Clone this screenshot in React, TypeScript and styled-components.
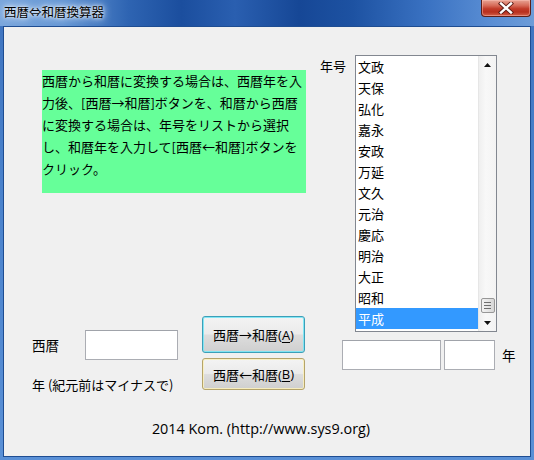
import styled, { createGlobalStyle } from "styled-components";

const eras = [
  "文政",
  "天保",
  "弘化",
  "嘉永",
  "安政",
  "万延",
  "文久",
  "元治",
  "慶応",
  "明治",
  "大正",
  "昭和",
  "平成",
];

export default function App() {
  return (
    <>
      <GlobalStyle />
      <Frame>
        <TitleBar>
          <Title>西暦⇔和暦換算器</Title>
          <CloseButton aria-label="close">
            <svg width="16" height="12" viewBox="0 0 16 12">
              <path
                d="M3 1.5 L13 10.5 M13 1.5 L3 10.5"
                stroke="#5a1a14"
                strokeWidth="4.2"
                strokeLinecap="square"
              />
              <path
                d="M3 1.5 L13 10.5 M13 1.5 L3 10.5"
                stroke="#ffffff"
                strokeWidth="2.4"
                strokeLinecap="square"
              />
            </svg>
          </CloseButton>
        </TitleBar>

        <Client>
          <Columns>
            <LeftColumn>
              <Info>
                <span>西暦から和暦に変換する場合は、西暦年を入</span>
                <span>力後、[西暦→和暦]ボタンを、和暦から西暦</span>
                <span>に変換する場合は、年号をリストから選択</span>
                <span>し、和暦年を入力して[西暦←和暦]ボタンを</span>
                <span>クリック。</span>
              </Info>

              <ConvertRow>
                <Fields>
                  <FieldRow>
                    <FieldLabel>西暦</FieldLabel>
                    <TextBox $width={93} />
                  </FieldRow>
                  <Note>年 (紀元前はマイナスで)</Note>
                </Fields>
                <Buttons>
                  <WinButton $focused>
                    西暦→和暦(<u>A</u>)
                  </WinButton>
                  <WinButton>
                    西暦←和暦(<u>B</u>)
                  </WinButton>
                </Buttons>
              </ConvertRow>
            </LeftColumn>

            <RightColumn>
              <ListRow>
                <EraLabel>年号</EraLabel>
                <ListBox>
                  <Items>
                    {eras.map((era) => (
                      <Item key={era} $selected={era === "平成"}>
                        {era}
                      </Item>
                    ))}
                  </Items>
                  <ScrollBar>
                    <Arrow>
                      <svg width="7" height="4" viewBox="0 0 7 4">
                        <path d="M3.5 0 L7 4 L0 4 Z" fill="#111" />
                      </svg>
                    </Arrow>
                    <Track />
                    <Thumb>
                      <Grip />
                      <Grip />
                      <Grip />
                    </Thumb>
                    <Arrow>
                      <svg width="7" height="4" viewBox="0 0 7 4">
                        <path d="M0 0 L7 0 L3.5 4 Z" fill="#111" />
                      </svg>
                    </Arrow>
                  </ScrollBar>
                </ListBox>
              </ListRow>

              <InputsRow>
                <TextBox $width={99} />
                <TextBox $width={51} />
                <YearLabel>年</YearLabel>
              </InputsRow>
            </RightColumn>
          </Columns>

          <Footer>2014 Kom. (http://www.sys9.org)</Footer>
        </Client>
      </Frame>
    </>
  );
}

const GlobalStyle = createGlobalStyle`
  html, body {
    margin: 0;
    padding: 0;
    background: #ffffff;
  }

  body {
    font-family: "Noto Sans CJK JP", "Noto Sans", sans-serif;
    font-size: 13px;
    color: #000;
  }
`;

const Frame = styled.div`
  width: 534px;
  height: 460px;
  display: flex;
  flex-direction: column;
  background: linear-gradient(180deg, #3f74bf 0%, #4a82cc 40%, #5a90d6 100%);
  box-sizing: border-box;
  overflow: hidden;
`;

const TitleBar = styled.div`
  height: 26px;
  flex: none;
  display: flex;
  align-items: flex-start;
  justify-content: space-between;
  background: linear-gradient(
    90deg,
    #7aa6dc 0%,
    #6496d4 12%,
    #2e64b2 24%,
    #1b4e9e 34%,
    #2a5fb0 44%,
    #164796 56%,
    #1d52a2 66%,
    #3a72c2 80%,
    #5a8ed4 92%,
    #6c9cd8 100%
  );
`;

const Title = styled.div`
  margin: 4px 0 0 4px;
  font-size: 12.5px;
  line-height: 16px;
  color: #000;
  padding: 0 6px 0 0;
  text-shadow: 0 0 6px #e6eef8, 0 0 10px #d8e6f6, 0 0 3px #ffffff;
  white-space: nowrap;
`;

const CloseButton = styled.div`
  width: 50px;
  height: 17px;
  margin-right: 3px;
  box-sizing: border-box;
  border: 1px solid #5c1e18;
  border-top: 0;
  border-radius: 0 0 4px 4px;
  background: linear-gradient(
    180deg,
    #e8a494 0%,
    #d66a58 35%,
    #c13a28 55%,
    #b8301f 75%,
    #d2604a 100%
  );
  box-shadow: inset 0 0 0 1px rgba(255, 200, 190, 0.45);
  display: flex;
  align-items: center;
  justify-content: center;
`;

const Client = styled.div`
  flex: 1;
  margin: 0 3px 3px 3px;
  border: 1px solid #1e4d92;
  background: #f0f0f0;
  display: flex;
  flex-direction: column;
`;

const Columns = styled.div`
  display: flex;
  align-items: flex-start;
`;

const LeftColumn = styled.div`
  width: 306px;
  display: flex;
  flex-direction: column;
`;

const Info = styled.div`
  margin: 43px 0 0 38px;
  width: 264px;
  height: 123px;
  background: #66ff99;
  display: flex;
  flex-direction: column;
  font-size: 13px;
  line-height: 22px;

  span {
    white-space: nowrap;
  }
`;

const ConvertRow = styled.div`
  margin-top: 123px;
  padding-left: 28px;
  display: flex;
  align-items: flex-start;
`;

const Fields = styled.div`
  width: 170px;
  display: flex;
  flex-direction: column;
`;

const FieldRow = styled.div`
  margin-top: 14px;
  display: flex;
  align-items: center;
`;

const FieldLabel = styled.span`
  width: 53px;
  font-size: 13.5px;
`;

const Note = styled.div`
  margin-top: 16px;
  line-height: 18px;
  font-size: 13px;
  white-space: nowrap;
`;

const TextBox = styled.div<{ $width: number }>`
  width: ${(p) => p.$width}px;
  height: 30px;
  box-sizing: border-box;
  background: #ffffff;
  border: 1px solid #abadb3;
  border-top-color: #a0a3aa;
  flex: none;
`;

const Buttons = styled.div`
  width: 103px;
  display: flex;
  flex-direction: column;
  gap: 5px;
`;

const WinButton = styled.div<{ $focused?: boolean }>`
  height: ${(p) => (p.$focused ? 37 : 32)}px;
  box-sizing: border-box;
  border: 1px solid ${(p) => (p.$focused ? "#3c9fb8" : "#b5a46a")};
  border-radius: 3px;
  background: linear-gradient(180deg, #f3f3f3 0%, #ebebeb 48%, #dddddd 52%, #cfcfcf 100%);
  box-shadow: inset 0 0 0 1px
    ${(p) => (p.$focused ? "rgba(120, 230, 245, 0.9)" : "rgba(250, 240, 190, 0.9)")};
  display: flex;
  align-items: center;
  justify-content: center;
  font-family: "Open Sans", "Noto Sans CJK JP", sans-serif;
  font-size: 13px;
  white-space: nowrap;

  u {
    text-underline-offset: 2px;
  }
`;

const RightColumn = styled.div`
  margin-left: 10px;
  display: flex;
  flex-direction: column;
`;

const ListRow = styled.div`
  margin-top: 28px;
  display: flex;
  align-items: flex-start;
`;

const EraLabel = styled.span`
  width: 35px;
  padding-top: 2px;
  line-height: 18px;
  font-size: 13px;
`;

const ListBox = styled.div`
  width: 142px;
  height: 277px;
  box-sizing: border-box;
  border: 1px solid #828790;
  background: #ffffff;
  display: flex;
`;

const Items = styled.div`
  flex: 1;
  display: flex;
  flex-direction: column;
`;

const Item = styled.div<{ $selected?: boolean }>`
  height: 21px;
  line-height: 21px;
  padding-left: 2px;
  font-size: 13px;
  background: ${(p) => (p.$selected ? "#3399ff" : "transparent")};
  color: ${(p) => (p.$selected ? "#ffffff" : "#000000")};
`;

const ScrollBar = styled.div`
  width: 17px;
  border-left: 1px solid #e6e6e6;
  background: linear-gradient(90deg, #efefef 0%, #f8f8f8 40%, #f3f3f3 100%);
  display: flex;
  flex-direction: column;
  align-items: center;
`;

const Arrow = styled.div`
  height: 17px;
  width: 100%;
  display: flex;
  align-items: center;
  justify-content: center;
`;

const Track = styled.div`
  flex: 1;
`;

const Thumb = styled.div`
  width: 14px;
  height: 15px;
  margin-bottom: 1px;
  box-sizing: border-box;
  border: 1px solid #979797;
  border-radius: 2px;
  background: linear-gradient(90deg, #f2f2f2 0%, #e6e6e6 50%, #d6d6d6 100%);
  display: flex;
  flex-direction: column;
  align-items: center;
  justify-content: center;
  gap: 2px;
`;

const Grip = styled.div`
  width: 7px;
  height: 1px;
  background: #6e6e6e;
`;

const InputsRow = styled.div`
  margin: 8px 0 0 22px;
  display: flex;
  align-items: center;
  gap: 3px;
`;

const YearLabel = styled.span`
  margin-left: 4px;
  font-size: 13.5px;
`;

const Footer = styled.div`
  margin-top: 26px;
  padding-right: 12px;
  text-align: center;
  line-height: 18px;
  font-family: "Open Sans", "Noto Sans CJK JP", sans-serif;
  font-size: 14.4px;
`;
